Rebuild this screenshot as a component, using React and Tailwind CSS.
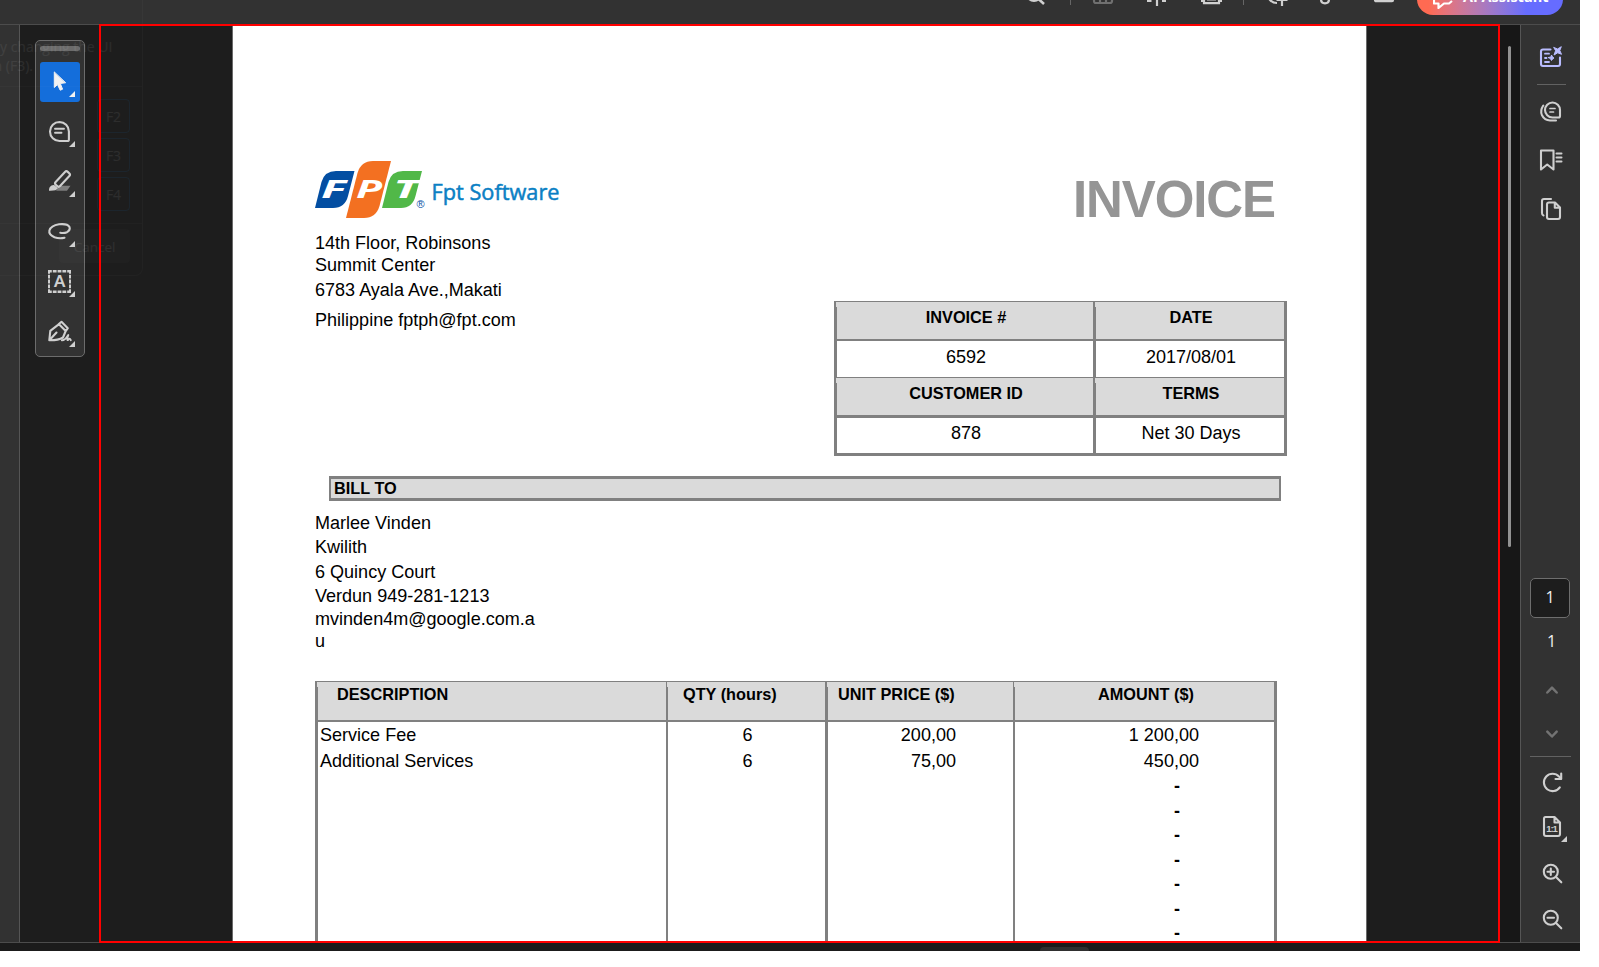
import React from "react";

const TOP_STROKE = { fill: "none", stroke: "#d0d0d0", strokeWidth: 2.2 };

function TopBar() {
  return (
    <header className="flex h-6 shrink-0 items-start overflow-hidden bg-[#323232] pl-[1020px]">
      <svg className="h-6 w-[397px] shrink-0" viewBox="1020 0 397 24" {...TOP_STROKE}>
        <circle cx="1034" cy="-6" r="7" />
        <path d="M1038 -1.5L1044 4" strokeWidth="2.6" />
        <path d="M1070.5 0V5M1243.5 0V5" stroke="#666" strokeWidth="1" />
        <path d="M1094 -14V1Q1094 3 1096 3H1110Q1112 3 1112 1V-14M1094 -1H1112M1100 -1V3M1106 -1V3" stroke="#707070" />
        <path d="M1157 -10V6M1147 1H1151.500M1162 1H1166" />
        <path d="M1204 1H1201M1204 -3V3.200H1219V-3M1219 1H1222M1207 -.500H1216" />
        <path d="M1268 -3Q1271 3 1277 3M1282 -8V6M1276.500 0H1287.500" />
        <path d="M1321 -8V-.5Q1321 3.300 1325 3.300Q1329 3.300 1329 -.5V-8" />
        <path d="M1375 -10V0Q1375 1.200 1376.500 1.200H1392Q1393 1.200 1393 0V-10" fill="#9a9a9a" />
      </svg>
      <div className="-mt-[17px] flex h-8 w-[146px] shrink-0 items-center rounded-full bg-gradient-to-r from-[#ff6a52] from-8% to-[#666cff] to-75% pl-4">
        <svg className="size-5 shrink-0" viewBox="0 0 20 20" fill="none" stroke="#fff" strokeWidth="2.2" strokeLinejoin="round">
          <path d="M1 2V14.500H5.500V19L11 14.500H16L19 12" />
        </svg>
        <span className="mb-1 ml-2.5 whitespace-nowrap font-['Open_Sans',sans-serif] text-[14.5px] leading-5 font-bold text-white">
          AI Assistant
        </span>
      </div>
    </header>
  );
}

function Corner() {
  return <path d="M35 29V35H29Z" fill="currentColor" stroke="none" />;
}

function Tool({ active, children }) {
  return (
    <button className={active ? "size-10 shrink-0 rounded-[3px] bg-[#146edb] text-[#f2f2f2]" : "size-10 shrink-0 text-[#cfcfcf]"}>
      <svg className="size-10" viewBox="0 0 40 40" fill="none" stroke="currentColor" strokeWidth="2.1" strokeLinecap="round" strokeLinejoin="round">
        {children}
        <Corner />
      </svg>
    </button>
  );
}

function ToolPalette() {
  return (
    <div className="mt-[15px] ml-[15px] flex h-[317px] w-[50px] shrink-0 flex-col items-center rounded-[5px] border border-[#6c6c6c] bg-[#323232] pt-[5px]">
      <div className="mb-[11px] h-[5px] w-10 shrink-0 rounded-sm bg-[#6b6b6b]" />
      <div className="flex flex-col gap-2.5">
        <Tool active>
          <path d="M14.300 10.300V25.500L17.500 22.600L20.200 28.200L22.600 27.200L20.300 21.500L25.300 20.800Z" fill="currentColor" strokeWidth="1" />
        </Tool>
        <Tool>
          <path d="M19.500 10A9.500 9.500 0 1 0 19.500 29H27.300Q28.900 29 28.900 27.400V19.500A9.500 9.500 0 0 0 19.500 10Z" />
          <path d="M15 16.800H24M15 20.800H21.500" strokeWidth="1.900" />
        </Tool>
        <Tool>
          <path d="M20 23.800H30.500L27 28.700H16Z" fill="#7d7d7d" stroke="none" />
          <rect x="13.700" y="14" width="17.600" height="6" rx="2" transform="rotate(-47 22.500 17)" />
          <path d="M14.500 23.200L18 26.200Q16.500 29 9 28.700Q8.800 25 11.500 23.500Q13 22.700 14.500 23.200Z" fill="currentColor" stroke="none" />
        </Tool>
        <Tool>
          <path d="M24.500 25.800Q19 27 14.500 25.200Q8.500 22.500 9.400 18.500Q11 13.500 19 12.300Q27.500 11.400 29.500 15Q30.600 18 27 20.200Q24 21.500 20.300 20.800" />
        </Tool>
        <Tool>
          <path d="M8 9.300H31M8 29.700H31" strokeLinecap="butt" strokeWidth="2.600" strokeDasharray="3.800 1" />
          <path d="M9 8V31M30 8V31" strokeLinecap="butt" strokeWidth="2" strokeDasharray="3.800 1" />
          <text x="19.700" y="24.700" textAnchor="middle" fontFamily="Lato, sans-serif" fontWeight="900" fontSize="16" fill="currentColor" stroke="none">A</text>
        </Tool>
        <Tool>
          <path d="M9.300 28.300L10.300 18.800L19 12.200L25.700 19L23 25.500Q18 28.500 9.300 28.300ZM9.800 27.800L16.500 20.500M18.500 12.300L21.500 9.800L27.800 16.200L25.700 19.200" />
          <path d="M21.800 28.300Q25 28.500 28.300 23Q26.500 28.500 28 28Q29.500 25.500 30.800 28.200" strokeWidth="1.900" />
        </Tool>
      </div>
    </div>
  );
}

/* Dialog that is nearly faded out */
function FadingDialog() {
  return (
    <div className="pointer-events-none absolute top-0 left-0 h-[276px] w-[143px] overflow-hidden rounded-br-lg border-r border-b border-white/[0.025] font-['Open_Sans',sans-serif] text-[14px] text-white/[0.07]">
      <div className="mt-[37px] h-[50px] border-b border-white/[0.02] leading-[19px] whitespace-nowrap">
        <div className="w-28 text-right">y changing the UI</div>
        <div className="w-[33px] text-right">
          <span className="float-right">n (F3).</span>
        </div>
      </div>
      <div className="mt-3 ml-[97px] flex flex-col gap-[5px]">
        {["F2", "F3", "F4"].map((k) => (
          <div key={k} className="flex h-[34px] w-[33px] items-center justify-center rounded border border-[#1d4060]/25">{k}</div>
        ))}
      </div>
      <div className="mt-3 h-px bg-white/[0.02]" />
      <div className="mt-[5px] ml-[59px] flex h-[34px] w-[71px] items-center justify-center rounded bg-white/[0.015] pt-0.5 text-[13.5px]">Cancel</div>
    </div>
  );
}

function Logo() {
  return (
    <svg className="h-[60px] w-[250px]" viewBox="315 160 250 60">
      <path d="M354.500 171L348 196Q345 208 333 208H315L321.500 182Q324.500 171 336 171Z" fill="#034ea2" />
      <path d="M391 161L379.500 206Q376 218 364 218H346L357.500 173Q361 161 373 161Z" fill="#f37021" />
      <path d="M422 171L415.500 196Q412.500 208 401 208H382L388.500 182Q391.500 171 403 171Z" fill="#51b848" />
      <g fill="#fff" fontFamily="'Open Sans', sans-serif" fontWeight="700" fontStyle="italic" fontSize="25">
        <text x="321" y="198" textLength="25" lengthAdjust="spacingAndGlyphs">F</text>
        <text x="356" y="198" textLength="26" lengthAdjust="spacingAndGlyphs">P</text>
        <text x="393" y="198" textLength="26" lengthAdjust="spacingAndGlyphs">T</text>
      </g>
      <text x="416.500" y="208" fontFamily="'Liberation Sans', sans-serif" fontSize="11" fill="#034ea2">®</text>
      <text x="431.500" y="199.500" textLength="128" lengthAdjust="spacingAndGlyphs" fontFamily="'Open Sans', sans-serif" fontWeight="500" fontSize="21.500" fill="#0a80c4" stroke="#0a80c4" strokeWidth=".5">Fpt Software</text>
    </svg>
  );
}

function Notch() {
  return <i className="absolute top-0 -left-px h-[5px] w-px bg-[#dadada]" />;
}

const HEAD = "relative bg-[#dadada] text-center text-[16.3px] font-bold";

function InfoTable() {
  return (
    <div className="grid h-[155px] w-[453px] grid-cols-[256px_188px] grid-rows-[37px_36px_37px_35px] gap-x-[3px] bg-[#808080] px-[3px] pt-px leading-5">
      <div className={`${HEAD} pt-[5px] pl-0.5`}><Notch />INVOICE #</div>
      <div className={`${HEAD} pt-[5px] pl-0.5`}><Notch />DATE</div>
      <div className="mt-0.5 -mb-0.5 bg-white pt-1.5 pl-0.5 text-center">6592</div>
      <div className="mt-0.5 -mb-0.5 bg-white pt-1.5 pl-0.5 text-center">2017/08/01</div>
      <div className={`${HEAD} top-[3px] pt-[5px] pl-0.5`}><Notch />CUSTOMER ID</div>
      <div className={`${HEAD} top-[3px] pt-[5px] pl-0.5`}><Notch />TERMS</div>
      <div className="mt-1.5 -mb-1.5 bg-white pt-[5px] pl-0.5 text-center">878</div>
      <div className="mt-1.5 -mb-1.5 bg-white pt-[5px] pl-0.5 text-center">Net 30 Days</div>
    </div>
  );
}

function LineItems() {
  return (
    <div className="mt-[21px] grid h-[261px] w-[962px] shrink-0 grid-cols-[348px_2px_157px_3px_185px_2px_259px] grid-rows-[38px_220px] gap-y-0.5 bg-[#808080] px-[3px] pt-px leading-5">
      <div className={`${HEAD} pt-0.5`}><Notch /><p className="pl-[19px] text-left">DESCRIPTION</p></div>
      <i />
      <div className={`${HEAD} pt-0.5`}><Notch /><p className="pl-[15px] text-left">QTY (hours)</p></div>
      <i />
      <div className={`${HEAD} pt-0.5`}><Notch /><p className="pl-[10px] text-left">UNIT PRICE ($)</p></div>
      <i />
      <div className={`${HEAD} pt-0.5`}><Notch /><p className="pl-[83px] text-left">AMOUNT ($)</p></div>
      <div className="flex flex-col gap-1.5 bg-white pt-[3px] pl-0.5"><p>Service Fee</p><p>Additional Services</p></div>
      <i />
      <div className="flex flex-col gap-1.5 bg-white pt-[3px] pl-0.5 text-center"><p>6</p><p>6</p></div>
      <i />
      <div className="flex flex-col gap-1.5 bg-white pt-[3px] pr-[57px] text-right"><p>200,00</p><p>75,00</p></div>
      <i />
      <div className="bg-white pt-[3px] text-right">
        <div className="flex flex-col gap-1.5 pr-[75px]"><p>1 200,00</p><p>450,00</p></div>
        <div className="mt-[3px] flex flex-col pr-[94px] leading-[24.5px] font-bold">
          {[1, 2, 3, 4, 5, 6, 7].map((n) => <p key={n}>-</p>)}
        </div>
      </div>
    </div>
  );
}

function Invoice() {
  return (
    <div className="flex h-[917px] w-[1135px] shrink-0 flex-col overflow-hidden border-x border-[#6a6a6a] bg-white pl-[82px] font-['Liberation_Sans',Arial,sans-serif] text-[18.04px] text-black">
      <div className="flex shrink-0">
        <div className="w-[519px] pt-[135px] leading-5 whitespace-nowrap">
          <Logo />
          <p className="mt-[13px]">14th Floor, Robinsons</p>
          <p className="mt-0.5">Summit Center</p>
          <p className="mt-[5px]">6783 Ayala Ave.,Makati</p>
          <p className="mt-2.5">Philippine fptph@fpt.com</p>
        </div>
        <div className="pt-[145px]">
          <h1 className="h-[131px] w-[441px] text-right text-[51px] leading-[60px] font-bold tracking-[-1.1px] text-[#959595]">INVOICE</h1>
          <InfoTable />
        </div>
      </div>
      <div className="mt-5 ml-3.5 h-[25px] w-[952px] shrink-0 border-x-2 border-y-[3px] border-[#808080] bg-[#dadada] pl-[3px] text-[16.3px] leading-[18px] font-bold">
        BILL TO
      </div>
      <div className="mt-3 flex h-[147px] shrink-0 flex-col leading-5">
        <p className="h-6">Marlee Vinden</p>
        <p className="h-[25px]">Kwilith</p>
        <p className="h-6">6 Quincy Court</p>
        <p className="h-[23px]">Verdun 949-281-1213</p>
        <p className="h-[22px]">mvinden4m@google.com.a</p>
        <p>u</p>
      </div>
      <LineItems />
    </div>
  );
}

function RightRail() {
  return (
    <aside className="flex w-[60px] shrink-0 flex-col border-l border-[#555] bg-[#323232] font-['Open_Sans',sans-serif] text-[16px] text-[#f0f0f0]">
      <svg className="h-[553px] w-[59px] shrink-0" viewBox="1521 25 59 553" fill="none" stroke="#cfcfcf" strokeWidth="2.1" strokeLinejoin="round" strokeLinecap="round">
        <g stroke="#b9bcff">
          <path d="M1550.500 49.500H1543Q1541 49.500 1541 51.500V64Q1541 66 1543 66H1558Q1560 66 1560 64V57.500" />
          <path d="M1545 53.700H1549M1545 58H1546.500M1545 62H1549" strokeWidth="1.800" />
          <path d="M1548.500 57.500L1551 57L1551.500 55L1552.500 57L1554 58L1552.500 59L1551.500 60.500L1550.500 58.800Z" fill="#b9bcff" strokeWidth="1" />
          <path d="M1554 47.500L1557.500 49L1561.300 46.700L1559.800 50.500L1561.500 54.300L1557.700 52.800L1554 55L1555.500 51Z" fill="#b9bcff" strokeWidth="1" />
        </g>
        <path d="M1537 84.500H1566" stroke="#626262" strokeWidth="1" strokeLinecap="butt" />
        <path d="M1552.500 102.500A7.500 7.500 0 0 0 1552.500 117.500H1558.500Q1560 117.500 1560 116V110A7.500 7.500 0 0 0 1552.500 102.500Z" />
        <path d="M1543.300 105.500Q1539.800 110.500 1542 115.300Q1544.500 120.300 1550 120.500H1556" />
        <path d="M1550 108.500H1555M1550 112H1553.500" strokeWidth="1.700" />
        <path d="M1541 150.500H1553.500V169.500L1547.200 164.500L1541 169.500Z" />
        <path d="M1556.500 153.500H1561.500M1556.500 157.500H1561.500M1556.500 161.500H1561.500" strokeWidth="2" />
        <path d="M1551 199H1544Q1542 199 1542 201V213Q1542 215 1543.500 215.500" />
        <path d="M1549 202.500H1555L1560 207.500V217Q1560 219 1558 219H1549Q1547 219 1547 217V204.500Q1547 202.500 1549 202.500ZM1554.800 203V207.700H1560" />
      </svg>
      <div className="ml-[9px] flex h-10 w-10 shrink-0 items-center justify-center rounded-[5px] border border-[#6e6e6e] bg-[#1d1d1d] pb-0.5">1</div>
      <div className="h-12 shrink-0 pt-3 pl-0.5 text-center leading-[22px]">1</div>
      <svg className="h-[276px] w-[59px] shrink-0" viewBox="1521 666 59 276" fill="none" stroke="#cfcfcf" strokeWidth="2.1" strokeLinejoin="round" strokeLinecap="round">
        <path d="M1547.300 692.500L1552 687.700L1556.700 692.500M1547.300 731.700L1552 736.500L1556.700 731.700" stroke="#737373" strokeWidth="2.500" />
        <path d="M1530 756.500H1571" stroke="#626262" strokeWidth="1" strokeLinecap="butt" />
        <path d="M1559.800 787.300A8.700 8.700 0 1 1 1559 776.500L1561 778.500" />
        <path d="M1561.200 773.500V779H1555.500" />
        <path d="M1545.500 817H1554.500L1560 822.500V834Q1560 836 1558 836H1546Q1544 836 1544 834V819Q1544 817 1545.500 817ZM1554.500 817.500V822.500H1560" />
        <g fontFamily="'Liberation Sans', sans-serif" fontSize="9.500" fontWeight="700" fill="#cfcfcf" stroke="none">
          <text x="1546.300" y="832.200" textLength="11.500">1:1</text>
        </g>
        <path d="M1567 836V842H1561Z" fill="#cfcfcf" stroke="none" />
        <circle cx="1550.800" cy="871.800" r="7" />
        <path d="M1556 877L1561.300 882.300M1547.500 871.800H1554M1550.800 868.500V875" />
        <circle cx="1550.800" cy="917.800" r="7" />
        <path d="M1556 923L1561.300 928.300M1547.500 917.800H1554" />
      </svg>
    </aside>
  );
}

export default function App() {
  return (
    <div className="h-[967px] w-[1599px] overflow-hidden bg-white">
      <div className="relative flex h-[951px] w-[1580px] flex-col overflow-hidden bg-[#1b1b1b]">
        <TopBar />
        <main className="flex h-[919px] shrink-0 border-y border-[#4c4c4c] bg-[#1d1d1d]">
          <div className="w-5 shrink-0 border-r border-[#555] bg-[#323232]" />
          <div className="w-[212px] shrink-0">
            <ToolPalette />
          </div>
          <Invoice />
          <div className="w-[133px] shrink-0" />
          <div className="w-5 shrink-0 bg-[#171717] pt-[21px] pl-2">
            <div className="h-[501px] w-[3px] rounded-full bg-[#929292]" />
          </div>
          <RightRail />
        </main>
        <div className="mt-1 ml-[1040px] h-1 w-[49px] rounded-t bg-[#2f2f2f]" />
        <FadingDialog />
        <div className="pointer-events-none absolute top-6 left-[99px] h-[919px] w-[1401px] border-2 border-[#ff0000]" />
      </div>
    </div>
  );
}
